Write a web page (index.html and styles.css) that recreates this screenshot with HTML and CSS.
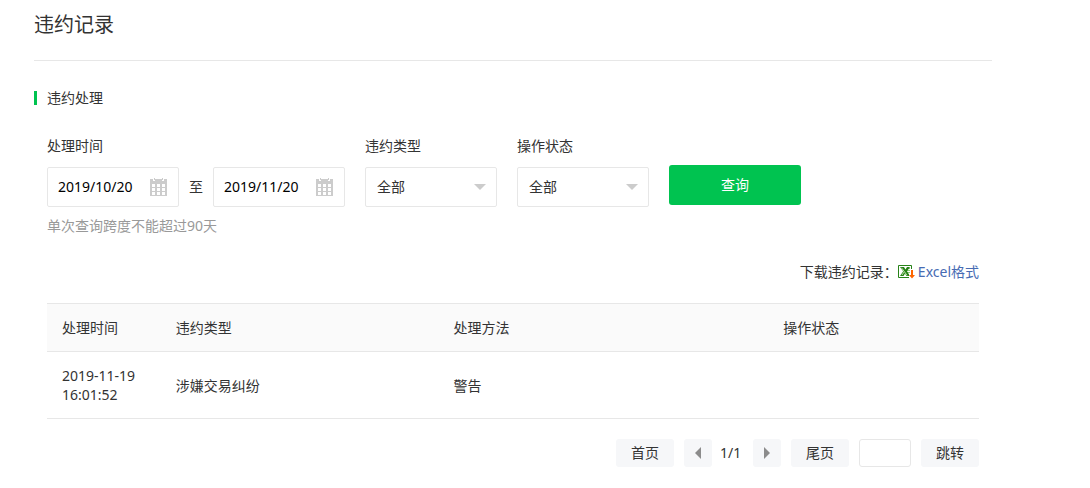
FILE: index.html
```html
<!DOCTYPE html>
<html lang="zh-CN">
<head>
    <meta charset="UTF-8">
    <meta name="viewport" content="width=device-width, initial-scale=1.0">
    <title>违约记录</title>
    <link rel="stylesheet" href="styles.css">
</head>
<body>
    <!-- Shared icons -->
    <svg class="icon-defs" width="0" height="0" aria-hidden="true">
        <symbol id="icon-calendar" viewBox="0 0 17 18">
            <path fill="#ccc" fill-rule="evenodd" d="M0 1h3v2h2V1h7v2h2V1h3v17H0z M2 6v3h3V6z M7 6v3h3V6z M12 6v3h3V6z M2 10v3h3v-3z M7 10v3h3v-3z M12 10v3h3v-3z M2 14v3h3v-3z M7 14v3h3v-3z M12 14v3h3v-3z" />
            <path fill="#ccc" d="M4 0h1v2H4z M12 0h1v2h-1z" />
        </symbol>
    </svg>

    <main class="page">
        <h1 class="page-title">违约记录</h1>
        <section class="section">
            <h2 class="section-title">违约处理</h2>
            <div class="section-body">
                <form class="filter">
                    <div class="field">
                        <label class="field-label" for="start-date">处理时间</label>
                        <div class="date-range">
                            <div class="date-box">
                                <input class="date-input" id="start-date" type="text" value="2019/10/20">
                                <svg class="calendar-icon" aria-hidden="true"><use href="#icon-calendar" /></svg>
                            </div>
                            <label class="date-to" for="end-date">至</label>
                            <div class="date-box">
                                <input class="date-input" id="end-date" type="text" value="2019/11/20">
                                <svg class="calendar-icon" aria-hidden="true"><use href="#icon-calendar" /></svg>
                            </div>
                        </div>
                        <p class="hint">单次查询跨度不能超过90天</p>
                    </div>
                    <div class="field">
                        <label class="field-label" for="type">违约类型</label>
                        <div class="select-box">
                            <select id="type">
                                <option>全部</option>
                            </select>
                        </div>
                    </div>
                    <div class="field">
                        <label class="field-label" for="status">操作状态</label>
                        <div class="select-box">
                            <select id="status">
                                <option>全部</option>
                            </select>
                        </div>
                    </div>
                    <button class="search-button" type="button">查询</button>
                </form>

                <div class="download">
                    <span>下载违约记录：</span>
                    <a href="#">
                        <svg class="excel-icon" viewBox="0 0 17 14" aria-hidden="true">
                            <path fill="#fff" stroke="#278218" d="M.5.5h13v12H.5z" />
                            <path stroke="#92c979" d="M9 3.5h3M9 5.5h3M9 7.5h3M9 9.5h3" />
                            <path fill="#278218" d="M2 2h4l1.5 2.5L9 2h3L9 6.300l3 4.700H8.500L7 8.500 5.500 11H2l3.200-4.700z" />
                            <path stroke="#b9dfa5" d="M3.500 2.800l5.500 7.500M4 10l2-3" />
                            <path fill="#fff" d="M12 4h4v5h1v5h-6V9h1z" />
                            <path fill="#f60" d="M13 5h2v5h2l-3 3.500-3-3.500h2z" />
                        </svg>
                        <span>Excel格式</span>
                    </a>
                </div>

                <table class="records">
                    <thead>
                        <tr>
                            <th class="col-time">处理时间</th>
                            <th class="col-type">违约类型</th>
                            <th class="col-method">处理方法</th>
                            <th>操作状态</th>
                        </tr>
                    </thead>
                    <tbody>
                        <tr>
                            <td>2019-11-19 16:01:52</td>
                            <td>涉嫌交易纠纷</td>
                            <td>警告</td>
                            <td></td>
                        </tr>
                    </tbody>
                </table>

                <nav class="pager" aria-label="分页">
                    <button class="pager-button" type="button">首页</button>
                    <div class="pager-steps">
                        <button class="pager-arrow" type="button" aria-label="上一页">
                            <svg viewBox="0 0 6 12"><path d="M6 0v12L0 6z" /></svg>
                        </button>
                        <span class="pager-count">1/1</span>
                        <button class="pager-arrow" type="button" aria-label="下一页">
                            <svg viewBox="0 0 6 12"><path d="M0 0v12l6-6z" /></svg>
                        </button>
                    </div>
                    <button class="pager-button" type="button">尾页</button>
                    <input class="pager-input" type="text" aria-label="页码">
                    <button class="pager-button" type="button">跳转</button>
                </nav>
            </div>
        </section>
    </main>
</body>
</html>
```

FILE: styles.css
```css
* {
    box-sizing: border-box;
}

body {
    margin: 0;
    background: #fff;
    color: #333;
    font: 14px/20px "Noto Sans", "Noto Sans CJK SC", sans-serif;
}

input,
select,
button {
    margin: 0;
    font: inherit;
    color: inherit;
}

button {
    padding: 0;
    border: none;
    cursor: pointer;
}

.icon-defs {
    position: absolute;
}

.page {
    padding: 0 98px 20px 34px;
}

.page-title {
    margin: 0;
    padding: 10px 0 20px;
    border-bottom: 1px solid #e7e7e7;
    font-size: 20px;
    font-weight: normal;
    line-height: 30px;
}

.section {
    padding-top: 27px;
}

.section-title {
    display: flex;
    align-items: center;
    gap: 10px;
    margin: 0;
    font-size: 14px;
    font-weight: normal;
}

.section-title::before {
    content: "";
    width: 3px;
    height: 14px;
    background: #00c350;
}

.section-body {
    padding: 28px 13px 0;
}

/* Filter */
.filter {
    display: flex;
    align-items: flex-start;
    gap: 20px;
}

.field-label {
    display: block;
    margin-bottom: 11px;
}

.date-range {
    display: flex;
    align-items: center;
}

.date-to {
    width: 34px;
    text-align: center;
}

.date-box,
.select-box {
    display: flex;
    align-items: center;
    width: 132px;
    height: 40px;
    border: 1px solid #e7e7e7;
    border-radius: 2px;
}

.date-box {
    padding: 0 11px 0 10px;
    color: #000;
}

.date-input {
    flex: 1;
    min-width: 0;
    padding: 0;
    border: none;
    outline: none;
    background: none;
}

.calendar-icon {
    width: 17px;
    height: 18px;
}

.select-box {
    display: grid;
}

.select-box select {
    grid-area: 1 / 1;
    width: 100%;
    height: 100%;
    padding: 0 30px 0 11px;
    border: none;
    outline: none;
    background: none;
    appearance: none;
}

.select-box::after {
    content: "";
    grid-area: 1 / 1;
    justify-self: end;
    margin-right: 10px;
    border: 6px solid transparent;
    border-top-color: #ccc;
    border-bottom: none;
    pointer-events: none;
}

.hint {
    margin: 9px 0 0;
    color: #999;
}

.search-button {
    width: 132px;
    height: 40px;
    margin-top: 29px;
    border-radius: 3px;
    background: #00c350;
    color: #fff;
}

/* Download */
.download {
    display: flex;
    justify-content: flex-end;
    margin: 26px 0 21px;
}

.download a {
    display: flex;
    align-items: center;
    gap: 3px;
    color: #476bb3;
    text-decoration: none;
}

.excel-icon {
    width: 17px;
    height: 14px;
    fill: none;
}

/* Records */
.records {
    width: 100%;
    border-collapse: collapse;
    border-top: 1px solid #e7e7e7;
    table-layout: fixed;
}

.records th,
.records td {
    padding: 14px 15px;
    border-bottom: 1px solid #e7e7e7;
    font-weight: normal;
    text-align: left;
}

.records th {
    padding-bottom: 13px;
    background: #fafafa;
}

.records td {
    line-height: 19px;
}

.col-time {
    width: 12.2%;
}

.col-type {
    width: 29.8%;
}

.col-method {
    width: 35.4%;
}

/* Pager */
.pager {
    display: flex;
    justify-content: flex-end;
    gap: 10px;
    margin-top: 20px;
}

.pager-button,
.pager-arrow {
    height: 28px;
    border-radius: 3px;
    background: #f6f7f9;
}

.pager-button {
    width: 58px;
}

.pager-steps {
    display: flex;
    align-items: center;
}

.pager-count {
    min-width: 41px;
    padding: 0 8px;
}

.pager-arrow {
    display: flex;
    align-items: center;
    justify-content: center;
    width: 28px;
}

.pager-arrow svg {
    width: 6px;
    height: 12px;
    fill: #8c8c8c;
}

.pager-input {
    width: 52px;
    height: 28px;
    padding: 0 8px;
    border: 1px solid #e7e7e7;
    border-radius: 3px;
}
```
